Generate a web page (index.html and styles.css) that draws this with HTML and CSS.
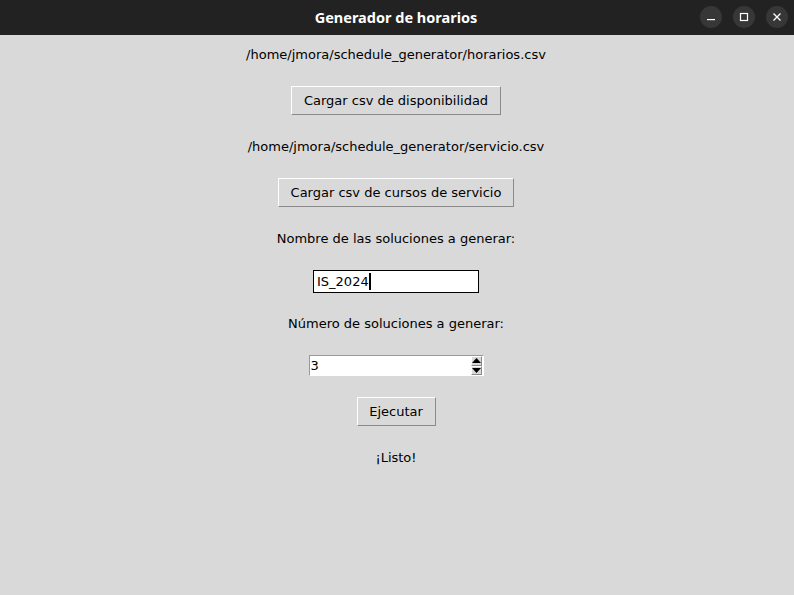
FILE: index.html
```html
<!DOCTYPE html>
<html>
<head>
<meta charset="utf-8">
<link rel="stylesheet" href="styles.css">
</head>
<body>
<div class="window">
  <header class="titlebar">
    <div class="title">Generador de horarios</div>
    <div class="controls">
      <span class="ctl"><svg width="10" height="10" viewBox="0 0 10 10"><rect x="1" y="7" width="8" height="1.2" fill="#fff"/></svg></span>
      <span class="ctl"><svg width="10" height="10" viewBox="0 0 10 10"><rect x="1.5" y="1.5" width="7" height="7" fill="none" stroke="#fff" stroke-width="1.2"/></svg></span>
      <span class="ctl"><svg width="10" height="10" viewBox="0 0 10 10"><path d="M1.5 1.5L8.5 8.5M8.5 1.5L1.5 8.5" stroke="#fff" stroke-width="1.3"/></svg></span>
    </div>
  </header>
  <main class="content">
    <div class="label">/home/jmora/schedule_generator/horarios.csv</div>
    <button class="btn btn-disp">Cargar csv de disponibilidad</button>
    <div class="label">/home/jmora/schedule_generator/servicio.csv</div>
    <button class="btn btn-serv">Cargar csv de cursos de servicio</button>
    <div class="label">Nombre de las soluciones a generar:</div>
    <div class="entry"><span>IS_2024</span><span class="caret"></span></div>
    <div class="label label-tight">Número de soluciones a generar:</div>
    <div class="spin">
      <span class="spin-val">3</span>
      <span class="arrows">
        <span class="arrow"><svg width="9" height="5" viewBox="0 0 9 5"><path d="M0 5L4.5 0L9 5Z" fill="#000"/></svg></span>
        <span class="arrow"><svg width="9" height="5" viewBox="0 0 9 5"><path d="M0 0L4.5 5L9 0Z" fill="#000"/></svg></span>
      </span>
    </div>
    <button class="btn btn-run">Ejecutar</button>
    <div class="label">¡Listo!</div>
  </main>
</div>
</body>
</html>
```
FILE: styles.css
```css
html, body {
  margin: 0;
  padding: 0;
  width: 794px;
  height: 595px;
  overflow: hidden;
  background: #d9d9d9;
}
.window {
  width: 794px;
  height: 595px;
  display: flex;
  flex-direction: column;
  font-family: "DejaVu Sans", "Liberation Sans", sans-serif;
  font-size: 13px;
  color: #000;
}
.titlebar {
  height: 35px;
  flex: 0 0 35px;
  background: #222222;
  display: flex;
  align-items: center;
  justify-content: center;
  position: relative;
}
.title {
  color: #fff;
  font-family: "Noto Sans", "DejaVu Sans", sans-serif;
  font-weight: bold;
  font-size: 14.5px;
  margin-top: -1px;
  margin-right: 2px;
}
.controls {
  position: absolute;
  right: 6px;
  top: 6px;
  display: flex;
  gap: 11px;
}
.ctl {
  width: 22px;
  height: 22px;
  border-radius: 50%;
  background: #373737;
  display: flex;
  align-items: center;
  justify-content: center;
}
.content {
  display: flex;
  flex-direction: column;
  align-items: center;
  padding-top: 9px;
  padding-right: 2px;
  gap: 21px;
}
.label {
  height: 21px;
  line-height: 21px;
  white-space: nowrap;
}
.label-tight {
  margin-top: -1px;
}
.btn {
  height: 29px;
  box-sizing: border-box;
  font: inherit;
  color: #000;
  background: #d9d9d9;
  border: 1px solid;
  border-color: #ffffff #8a8a8a #8a8a8a #ffffff;
  padding: 0 11px;
  margin: 0;
}
.btn-disp { width: 210px; }
.btn-serv { width: 236px; }
.btn-run { width: 79px; }
.entry {
  width: 166px;
  height: 23px;
  box-sizing: border-box;
  border: 1px solid #000;
  background: #fff;
  display: flex;
  align-items: center;
  padding-left: 3px;
}
.caret {
  width: 2px;
  height: 17px;
  background: #000;
}
.spin {
  width: 175px;
  height: 21px;
  box-sizing: border-box;
  border: 1px solid;
  border-color: #9a9a9a #ffffff #ffffff #9a9a9a;
  background: #fff;
  display: flex;
  align-items: center;
  justify-content: space-between;
  padding-left: 1px;
}
.arrows {
  display: flex;
  flex-direction: column;
  width: 11px;
  height: 19px;
  margin-right: 1px;
}
.arrow {
  flex: 1;
  background: #d9d9d9;
  border: 1px solid;
  border-color: #ffffff #8a8a8a #8a8a8a #ffffff;
  display: flex;
  align-items: center;
  justify-content: center;
  box-sizing: border-box;
}
```
